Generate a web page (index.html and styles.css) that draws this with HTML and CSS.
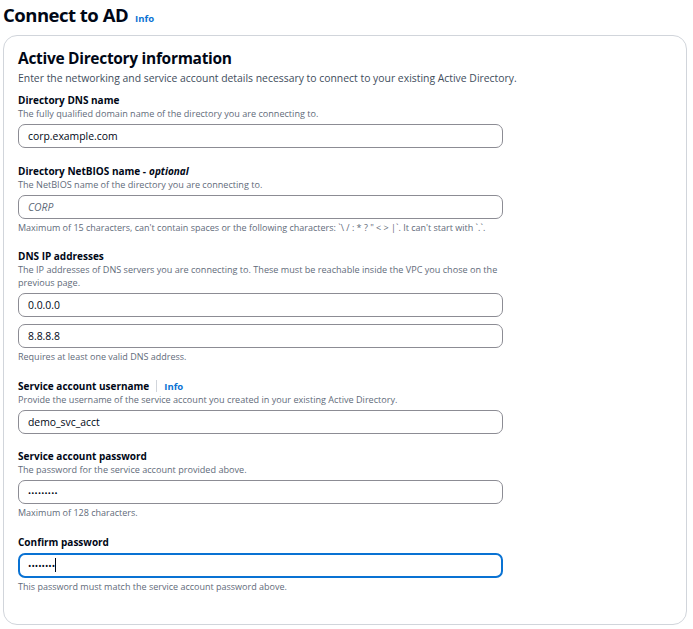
FILE: index.html
```html
<!DOCTYPE html>
<html lang="en">
<head>
<meta charset="utf-8">
<title>Connect to AD</title>
<link rel="stylesheet" href="styles.css">
</head>
<body>
<div class="page">
  <header class="page-header">
    <h1 class="page-title">Connect to AD</h1>
    <a class="info-link" href="#">Info</a>
  </header>
  <section class="card">
    <div class="card-header">
      <h2 class="card-title">Active Directory information</h2>
      <p class="card-desc">Enter the networking and service account details necessary to connect to your existing Active Directory.</p>
    </div>
    <div class="fields">
      <div class="field">
        <div class="label">Directory DNS name</div>
        <div class="desc">The fully qualified domain name of the directory you are connecting to.</div>
        <div class="controls"><input class="input" type="text" value="corp.example.com"></div>
      </div>
      <div class="field">
        <div class="label">Directory NetBIOS name - <i>optional</i></div>
        <div class="desc">The NetBIOS name of the directory you are connecting to.</div>
        <div class="controls"><input class="input" type="text" placeholder="CORP"></div>
        <div class="hint">Maximum of 15 characters, can't contain spaces or the following characters: `\ / : * ? " &lt; &gt; |`. It can't start with `.`.</div>
      </div>
      <div class="field">
        <div class="label">DNS IP addresses</div>
        <div class="desc">The IP addresses of DNS servers you are connecting to. These must be reachable inside the VPC you chose on the previous page.</div>
        <div class="controls multi">
          <input class="input" type="text" value="0.0.0.0">
          <input class="input" type="text" value="8.8.8.8">
        </div>
        <div class="hint">Requires at least one valid DNS address.</div>
      </div>
      <div class="field">
        <div class="label">Service account username <span class="sep"></span><a class="info-link small" href="#">Info</a></div>
        <div class="desc">Provide the username of the service account you created in your existing Active Directory.</div>
        <div class="controls"><input class="input" type="text" value="demo_svc_acct"></div>
      </div>
      <div class="field">
        <div class="label">Service account password</div>
        <div class="desc">The password for the service account provided above.</div>
        <div class="controls"><input class="input" type="password" value="password1"></div>
        <div class="hint">Maximum of 128 characters.</div>
      </div>
      <div class="field">
        <div class="label">Confirm password</div>
        <div class="controls"><div class="input focused"><span class="dots">&#8226;&#8226;&#8226;&#8226;&#8226;&#8226;&#8226;&#8226;</span><span class="caret"></span></div></div>
        <div class="hint">This password must match the service account password above.</div>
      </div>
    </div>
  </section>
</div>
</body>
</html>
```
FILE: styles.css
```css
* { box-sizing: border-box; }
html, body { margin: 0; padding: 0; background: #ffffff; }
body {
  font-family: "Open Sans", "Noto Sans", sans-serif;
  color: #000716;
}
.page { padding: 2px 6px 6px 3px; }
.page-header { display: flex; align-items: baseline; gap: 7px; height: 33px; }
.page-title { margin: 0; font-size: 18.5px; font-weight: 700; line-height: 25px; letter-spacing: -0.5px; }
.info-link { color: #0972d3; font-size: 9.5px; font-weight: 700; text-decoration: none; }
.card {
  border: 1px solid #d1d5db;
  border-radius: 14px;
  padding: 11px 14px 31px 14px;
  width: 684px;
}
.card-title { margin: 0; font-size: 15.5px; font-weight: 700; line-height: 22px; letter-spacing: -0.3px; }
.card-desc { margin: 2px 0 0; font-size: 10.4px; line-height: 14px; color: #414d5c; }
.fields { display: flex; flex-direction: column; gap: 16.5px; margin-top: 9px; }
.field { display: flex; flex-direction: column; }
.label { font-size: 10px; font-weight: 700; line-height: 13px; display: flex; align-items: center; gap: 0; }
.label i { margin-left: 3px; }
.sep { display: inline-block; width: 1px; height: 12px; background: #d1d5db; margin: 0 7px 0 7px; }
.info-link.small { font-size: 9.5px; }
.desc { font-size: 9.1px; line-height: 13px; color: #5f6b7a; width: 485px; }
.hint { font-size: 9px; line-height: 13px; color: #5f6b7a; margin-top: 2px; }
.controls { margin-top: 4px; display: flex; flex-direction: column; gap: 7px; }
.input {
  width: 485px;
  height: 24px;
  border: 1px solid #8c8c94;
  border-radius: 7px;
  padding: 0 9px;
  font-family: "Open Sans", "Noto Sans", sans-serif;
  font-size: 10.4px;
  color: #000716;
  background: #fff;
  outline: none;
  display: flex;
  align-items: center;
}
.input::placeholder { color: #5f6b7a; font-style: italic; }
.input[type="password"] { font-size: 8px; letter-spacing: 0.3px; }
.input.focused { border: 2px solid #0972d3; height: 25px; padding: 0 8px; }
.dots { font-size: 9px; letter-spacing: 0px; line-height: 1; }
.caret { display: inline-block; width: 1px; height: 14px; background: #000716; margin-left: 0; }
```
